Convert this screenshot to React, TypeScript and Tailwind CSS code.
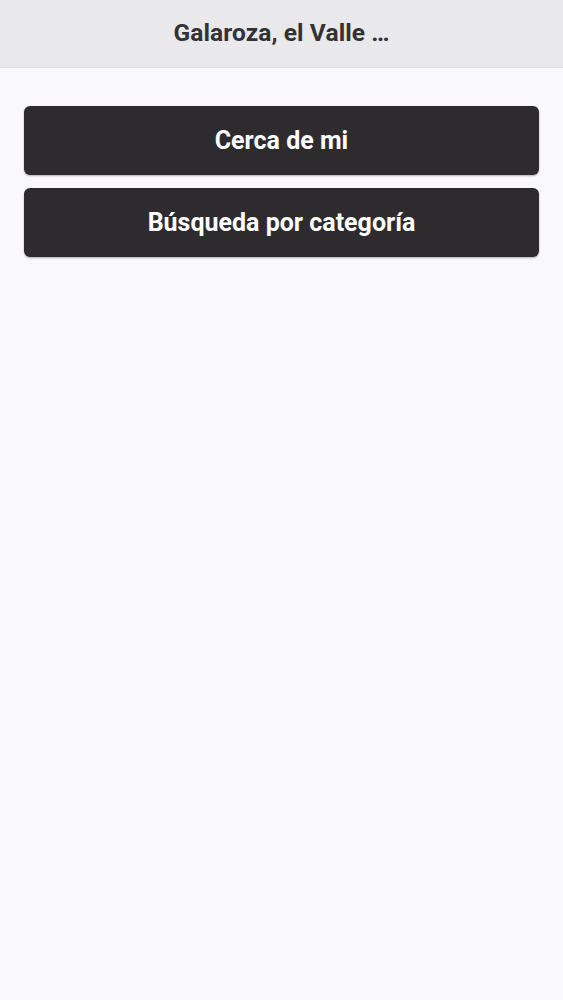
export default function App() {
  return (
    <div className="min-h-screen bg-[#f9f8fa] font-['Roboto',sans-serif]">
      {/* header */}
      <header className="h-[68px] flex items-center justify-center bg-[#e9e8ea] border-b border-[#dcdbdd]">
        <h1 className="text-[24.5px] font-bold text-[#333234] tracking-[0.1px]">Galaroza, el Valle …</h1>
      </header>

      {/* menu */}
      <div className="px-[24px] pt-[38px] flex flex-col gap-[13px]">
        <button className="h-[69px] w-full rounded-[6px] bg-[#2e2b2f] text-white text-[25px] font-bold shadow-[0_1px_2px_rgba(0,0,0,0.3)]">
          Cerca de mi
        </button>
        <button className="h-[69px] w-full rounded-[6px] bg-[#2e2b2f] text-white text-[25px] font-bold shadow-[0_1px_2px_rgba(0,0,0,0.3)]">
          Búsqueda por categoría
        </button>
      </div>
    </div>
  );
}
